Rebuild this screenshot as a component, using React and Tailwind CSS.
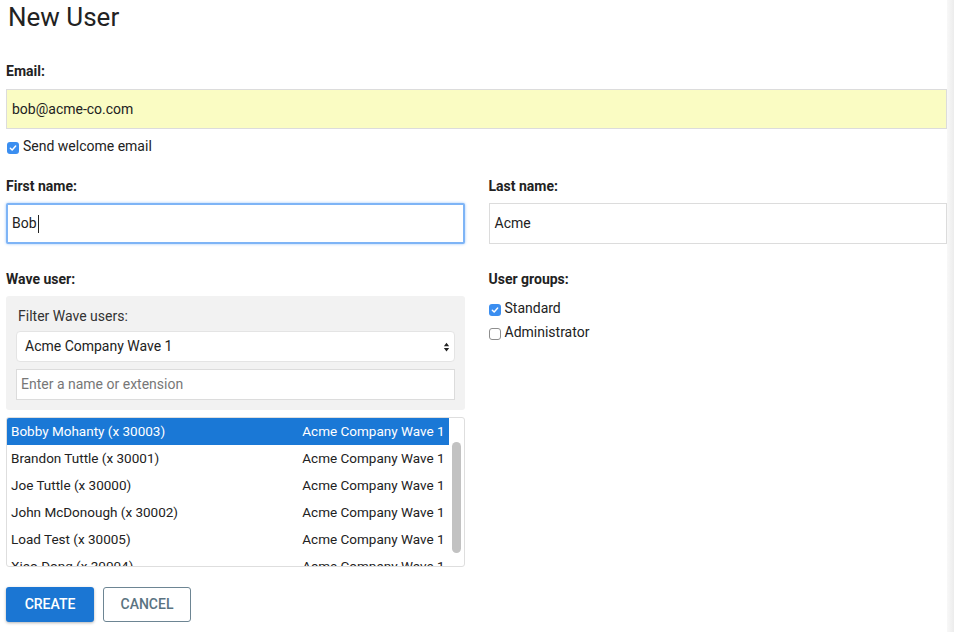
import React, { useState } from 'react';

const users = [
  { name: 'Bobby Mohanty (x 30003)', wave: 'Acme Company Wave 1' },
  { name: 'Brandon Tuttle (x 30001)', wave: 'Acme Company Wave 1' },
  { name: 'Joe Tuttle (x 30000)', wave: 'Acme Company Wave 1' },
  { name: 'John McDonough (x 30002)', wave: 'Acme Company Wave 1' },
  { name: 'Load Test (x 30005)', wave: 'Acme Company Wave 1' },
  { name: 'Xiao Dong (x 30004)', wave: 'Acme Company Wave 1' },
];

// small mac-style checkbox
const Check = ({ checked }) =>
  checked ? (
    <span className="mt-[4px] flex h-[12px] w-[12px] shrink-0 items-center justify-center rounded-[3px] bg-[#3b8ef0]">
      <svg viewBox="0 0 12 12" className="h-[10px] w-[10px]">
        <path d="M2.8 6.3 L5 8.5 L9.2 3.6" fill="none" stroke="white" strokeWidth="1.7" strokeLinecap="round" strokeLinejoin="round" />
      </svg>
    </span>
  ) : (
    <span className="mt-[4px] block h-[12px] w-[12px] shrink-0 rounded-[3px] border border-[#8e8e8e] bg-white" />
  );

const Label = ({ children }) => (
  <div className="text-[14px] font-bold leading-[18px] text-[#222]">{children}</div>
);

const App = () => {
  const [selected] = useState(0);

  return (
    <div className="flex min-h-[632px] bg-white font-['Roboto',sans-serif] text-[#222]">
      <div className="flex-1 pl-[6px]">
        <h1 className="pl-[2px] pt-[1px] text-[26px] font-normal leading-[32px] text-[#222]">New User</h1>

        {/* Email */}
        <div className="mt-[29px]">
          <Label>Email:</Label>
          <div className="mt-[9px] flex h-[40px] items-center border border-[#dcdcdc] bg-[#fafcc3] px-[5px] text-[14px]">
            bob@acme-co.com
          </div>
          <div className="mt-[9px] flex items-start gap-[4px] pl-[1px] text-[14px] leading-[16px]">
            <Check checked />
            <span>Send welcome email</span>
          </div>
        </div>

        <div className="mt-[23px] grid grid-cols-2 gap-x-[24px]">
          {/* First name */}
          <div>
            <Label>First name:</Label>
            <div className="mt-[8px] flex h-[41px] items-center rounded-[2px] border-2 border-[#7eb4f6] bg-white px-[4px] text-[14px] shadow-[0_0_3px_#9cc6fa]">
              Bob<span className="ml-[1px] h-[18px] w-px bg-[#222]" />
            </div>
          </div>
          {/* Last name */}
          <div>
            <Label>Last name:</Label>
            <div className="mt-[8px] flex h-[41px] items-center border border-[#dcdcdc] bg-white px-[5px] text-[14px]">
              Acme
            </div>
          </div>

          {/* Wave user */}
          <div className="mt-[26px]">
            <Label>Wave user:</Label>
            <div className="mt-[8px] rounded-[3px] bg-[#f2f2f2] px-[10px] pb-[10px] pt-[12px]">
              <div className="pl-[2px] text-[14px] leading-[16px] text-[#333]">Filter Wave users:</div>
              <div className="mt-[7px] flex h-[31px] items-center justify-between rounded-[4px] border border-[#e4e4e4] bg-white pl-[8px] pr-[4px] text-[14px]">
                <span>Acme Company Wave 1</span>
                <svg viewBox="0 0 8 12" className="h-[12px] w-[7px]">
                  <path d="M4 1 L7 5 L1 5 Z M4 11 L7 7 L1 7 Z" fill="#222" />
                </svg>
              </div>
              <div className="mt-[7px] flex h-[31px] items-center border border-[#dcdcdc] bg-white px-[4px] text-[14px] text-[#777]">
                Enter a name or extension
              </div>
            </div>

            <div className="mt-[7px] flex h-[150px] overflow-hidden rounded-[3px] border border-[#dedede] bg-white">
              <div className="flex-1">
                {users.map((u, i) => (
                  <div
                    key={u.name}
                    className={`flex h-[27px] items-center justify-between pl-[4px] pr-[4px] text-[13.5px] ${
                      i === selected ? 'bg-[#1a78d6] text-white' : 'text-[#222]'
                    }`}
                  >
                    <span>{u.name}</span>
                    <span>{u.wave}</span>
                  </div>
                ))}
              </div>
              <div className="w-[15px] pl-[3px] pt-[24px]">
                <div className="h-[111px] w-[9px] rounded-full bg-[#c2c2c2]" />
              </div>
            </div>
          </div>

          {/* User groups */}
          <div className="mt-[26px]">
            <Label>User groups:</Label>
            <div className="mt-[12px] flex flex-col gap-[8px] text-[14px] leading-[16px]">
              <div className="flex items-start gap-[4px]">
                <Check checked />
                <span>Standard</span>
              </div>
              <div className="flex items-start gap-[4px]">
                <Check />
                <span>Administrator</span>
              </div>
            </div>
          </div>
        </div>

        {/* Actions */}
        <div className="mt-[20px] flex gap-[9px]">
          <button className="h-[35px] w-[88px] rounded-[3px] bg-[#1b76d3] text-[14px] font-medium text-white shadow-[0_1px_3px_rgba(0,0,0,0.3)]">
            CREATE
          </button>
          <button className="h-[35px] w-[88px] rounded-[3px] border border-[#6d8593] bg-white text-[14px] font-medium text-[#5a7381]">
            CANCEL
          </button>
        </div>
      </div>
      <div className="w-[7px] bg-gradient-to-r from-[#f8f8f8] to-[#ececec]" />
    </div>
  );
};

export default App;
